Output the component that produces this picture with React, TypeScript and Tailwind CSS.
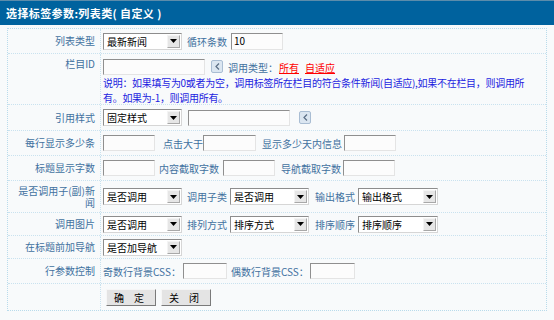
import type { ReactNode } from "react";

const FONT = { fontFamily: '"Noto Sans CJK SC", "Noto Sans", sans-serif' };

function Caret() {
  return (
    <svg width="7" height="4" viewBox="0 0 7 4">
      <path d="M0 0h7L3.5 4z" fill="#000" />
    </svg>
  );
}

function Select({ value, width = "w-[79px]" }: { value: string; width?: string }) {
  return (
    <div
      className={`flex h-[17px] ${width} shrink-0 items-stretch border border-[#8d8d8d] border-b-[#d6d6d6] border-r-[#d6d6d6] bg-white`}
    >
      <span className="flex-1 truncate pl-[3px] text-[10px] leading-[15px] text-black">{value}</span>
      <span className="m-px flex w-[13px] items-center justify-center border border-[#a8a8a8] border-l-[#f4f4f4] border-t-[#f4f4f4] bg-[#e6e6e6]">
        <Caret />
      </span>
    </div>
  );
}

function Input({ width, value, height = "h-4" }: { width: string; value?: string; height?: string }) {
  return (
    <div
      className={`${width} ${height} shrink-0 border border-[#8f8f8f] border-b-[#e4e4e4] border-r-[#e4e4e4] bg-[#fcfcfc] pl-[2px] text-[10px] leading-[14px] text-black`}
    >
      {value}
    </div>
  );
}

function PickButton() {
  return (
    <span className="flex h-[13px] w-[12px] shrink-0 items-center justify-center rounded-[2px] border border-[#a9bdd3] bg-[#dbe6f1]">
      <svg width="5" height="7" viewBox="0 0 5 7">
        <path d="M4 0.5L1 3.5L4 6.5" fill="none" stroke="#5b6f86" strokeWidth="1.2" />
      </svg>
    </span>
  );
}

function Txt({ children, className = "" }: { children: ReactNode; className?: string }) {
  return <span className={`shrink-0 whitespace-nowrap text-[10px] text-[#41719f] ${className}`}>{children}</span>;
}

function Row({
  label,
  height,
  top = false,
  last = false,
  children,
}: {
  label: ReactNode;
  height: string;
  top?: boolean;
  last?: boolean;
  children: ReactNode;
}) {
  return (
    <div className={`flex ${height} ${last ? "" : "border-b border-dotted border-[#c9e2ef]"}`}>
      <div
        className={`flex w-[93px] shrink-0 justify-end border-r border-dotted border-[#c9e2ef] pl-2 pr-[5px] text-right text-[10px] leading-[12px] text-[#41719f] ${
          top ? "items-start pt-[4px]" : "items-center"
        }`}
      >
        <span>{label}</span>
      </div>
      <div className={`flex min-w-0 flex-1 pl-[2px] ${top ? "flex-col pt-[5px]" : "items-center"}`}>{children}</div>
    </div>
  );
}

export default function App() {
  return (
    <div className="h-[320px] w-[554px] overflow-hidden bg-[#f8fafb]" style={FONT}>
      <div className="flex h-[25px] items-center border-t border-[#5c8cab] bg-[#00629e] pl-[6px]">
        <span className="text-[11px] font-bold tracking-[0.4px] text-white">选择标签参数:列表类( 自定义 )</span>
      </div>

      <div className="mx-[7px] mt-[3px] w-[540px] border border-dotted border-[#b9dbeb] bg-[#f8fafb]">
        <Row label="列表类型" height="h-[25px]">
          <Select value="最新新闻" />
          <Txt className="ml-[5px] mr-[4px]">循环条数</Txt>
          <Input width="w-[52px]" height="h-[17px]" value="10" />
        </Row>

        <Row label="栏目ID" height="h-[51px]" top>
          <div className="flex items-center">
            <Input width="w-[102px]" />
            <span className="ml-[6px] -mt-[2px]">
              <PickButton />
            </span>
            <Txt className="ml-[5px]">调用类型：</Txt>
            <a className="ml-[1px] text-[10px] text-[#ff0000] underline">所有</a>
            <a className="ml-[6px] text-[10px] text-[#ff0000] underline">自适应</a>
          </div>
          <p className="whitespace-nowrap text-[10px] leading-[15px] tracking-[-0.3px] text-[#1d1de0]">
            说明：如果填写为0或者为空，调用标签所在栏目的符合条件新闻(自适应),如果不在栏目，则调用所
            <br />
            有。如果为-1，则调用所有。
          </p>
        </Row>

        <Row label="引用样式" height="h-[26px]">
          <Select value="固定样式" />
          <span className="ml-[6px]">
            <Input width="w-[102px]" />
          </span>
          <span className="ml-[9px]">
            <PickButton />
          </span>
        </Row>

        <Row label="每行显示多少条" height="h-[25px]">
          <Input width="w-[52px]" />
          <Txt className="ml-[8px]">点击大于</Txt>
          <Input width="w-[53px]" />
          <Txt className="ml-[6px] mr-[2px]">显示多少天内信息</Txt>
          <Input width="w-[52px]" />
        </Row>

        <Row label="标题显示字数" height="h-[25px]">
          <Input width="w-[52px]" />
          <Txt className="ml-[4px] mr-[4px]">内容截取字数</Txt>
          <Input width="w-[52px]" />
          <Txt className="ml-[6px] mr-[2px]">导航截取字数</Txt>
          <Input width="w-[52px]" />
        </Row>

        <Row label="是否调用子(副)新闻" height="h-[32px]">
          <Select value="是否调用" />
          <Txt className="ml-[5px] mr-[3px]">调用子类</Txt>
          <Select value="是否调用" />
          <Txt className="ml-[6px] mr-[3px]">输出格式</Txt>
          <Select value="输出格式" width="w-[80px]" />
        </Row>

        <Row label="调用图片" height="h-[23px]">
          <Select value="是否调用" />
          <Txt className="ml-[5px] mr-[3px]">排列方式</Txt>
          <Select value="排序方式" />
          <Txt className="ml-[6px] mr-[3px]">排序顺序</Txt>
          <Select value="排序顺序" width="w-[80px]" />
        </Row>

        <Row label="在标题前加导航" height="h-[23px]">
          <Select value="是否加导航" />
        </Row>

        <Row label="行参数控制" height="h-[25px]">
          <Txt className="mr-[2px]">奇数行背景CSS：</Txt>
          <Input width="w-[44px]" />
          <Txt className="ml-[4px] mr-[1px]">偶数行背景CSS：</Txt>
          <Input width="w-[45px]" />
        </Row>

        <Row label="" height="h-[26px]" last>
          <div className="flex gap-[5px] pl-[3px]">
            <button className="h-[17px] w-[50px] border border-[#f6f6f6] border-b-[#7a7a7a] border-r-[#7a7a7a] bg-[#e4e4e4] text-[10px] leading-[15px] tracking-[4px] text-black">
              确 定
            </button>
            <button className="h-[17px] w-[50px] border border-[#f6f6f6] border-b-[#7a7a7a] border-r-[#7a7a7a] bg-[#e4e4e4] text-[10px] leading-[15px] tracking-[4px] text-black">
              关 闭
            </button>
          </div>
        </Row>
      </div>
    </div>
  );
}
